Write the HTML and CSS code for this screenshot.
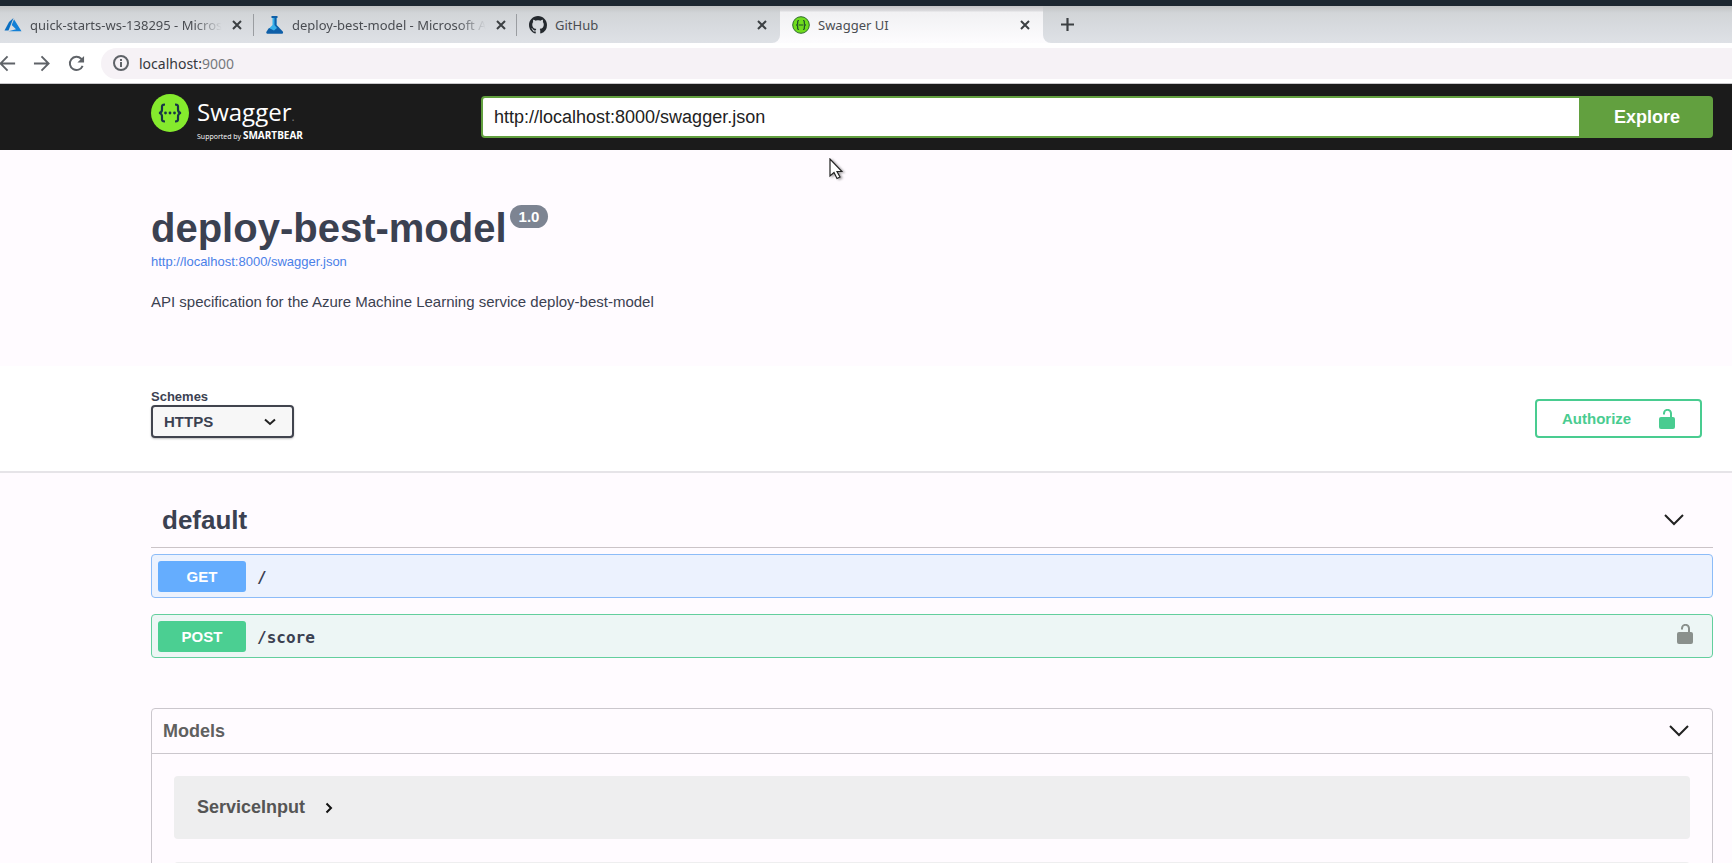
FILE: index.html
```html
<!DOCTYPE html>
<html lang="en">
<head>
<meta charset="utf-8">
<title>Swagger UI</title>
<link rel="stylesheet" href="styles.css">
</head>
<body>
<div class="screen">
  <div class="desktop-edge"></div>
  <div class="tab-strip">
    <div class="tab-group tab-group-left">
      <div class="tab tab-first">
        <svg class="tab-icon" viewBox="0 0 18 18" aria-hidden="true"><path d="M9.500 2 5 6 .500 14.500h4z" fill="#0a6fc2"/><path d="M10 3.200 7.700 9l4.300 4.200-7.500 2H17.500z" fill="#1380d6"/></svg>
        <span class="tab-title faded">quick-starts-ws-138295 - Micros</span>
        <button class="tab-close" type="button" aria-label="Close tab"><svg viewBox="0 0 10 10"><path d="M1 1l8 8M9 1L1 9"/></svg></button>
      </div>
      <div class="tab tab-second">
        <svg class="tab-icon" viewBox="0 0 18 18" aria-hidden="true"><path d="M5.500 0h6v2H5.500z" fill="#0f5fa8"/><path d="M6.500 2h4v7l3 3-5 3-7-1 5-5z" fill="#36b0ea"/><path d="M8.500 2h2v7l6.300 6.500c.7 1.200 0 2.300-1.200 2.300H2c-1.500 0-2.200-1.100-1.400-2.400L3 12l5 2.500L11 12 8.500 9z" fill="#0f5fa8"/></svg>
        <span class="tab-title faded">deploy-best-model - Microsoft A</span>
        <button class="tab-close" type="button" aria-label="Close tab"><svg viewBox="0 0 10 10"><path d="M1 1l8 8M9 1L1 9"/></svg></button>
      </div>
      <div class="tab tab-third">
        <svg class="tab-icon" viewBox="0 0 16 16" aria-hidden="true"><path fill="#24292e" d="M8 0C3.580 0 0 3.580 0 8c0 3.540 2.290 6.530 5.470 7.590.4.070.550-.170.550-.380 0-.190-.010-.820-.010-1.490-2.010.370-2.530-.490-2.690-.940-.090-.230-.480-.940-.820-1.130-.280-.150-.680-.520-.010-.530.630-.010 1.080.580 1.230.820.720 1.210 1.870.870 2.330.660.070-.520.280-.870.510-1.070-1.780-.2-3.640-.890-3.640-3.950 0-.870.310-1.590.820-2.150-.080-.2-.360-1.020.080-2.120 0 0 .670-.210 2.200.820.640-.180 1.320-.270 2-.270s1.360.090 2 .270c1.530-1.040 2.200-.820 2.200-.820.440 1.100.160 1.920.080 2.120.510.560.820 1.270.820 2.150 0 3.070-1.870 3.750-3.650 3.950.290.250.540.730.540 1.480 0 1.070-.010 1.930-.010 2.200 0 .210.150.460.550.380A8.010 8.010 0 0 0 16 8c0-4.420-3.580-8-8-8z"/></svg>
        <span class="tab-title">GitHub</span>
        <button class="tab-close" type="button" aria-label="Close tab"><svg viewBox="0 0 10 10"><path d="M1 1l8 8M9 1L1 9"/></svg></button>
      </div>
    </div>
    <div class="tab tab-active">
      <svg class="tab-icon" viewBox="0 0 18 18" aria-hidden="true"><circle cx="9" cy="9" r="8.300" fill="#6fdc1c" stroke="#2c6b2a" stroke-width="1"/><path d="M7 4.500c-1.700 0-1.300 1-1.300 2.500S5.300 8.800 4.300 9c1 .2 1.400.5 1.400 2s-.4 2.500 1.300 2.500M11 4.500c1.700 0 1.300 1 1.300 2.500s.4 1.800 1.400 2c-1 .2-1.400.5-1.400 2s.4 2.500-1.300 2.500M6.500 9h5" fill="none" stroke="#1e4b2c" stroke-width="1.200"/></svg>
      <span class="tab-title">Swagger UI</span>
      <button class="tab-close" type="button" aria-label="Close tab"><svg viewBox="0 0 10 10"><path d="M1 1l8 8M9 1L1 9"/></svg></button>
    </div>
    <div class="tab-group tab-group-right">
      <button class="new-tab" type="button" aria-label="New tab"><svg viewBox="0 0 12 12"><path d="M6 0v12M0 6h12"/></svg></button>
    </div>
  </div>

  <div class="toolbar">
    <button class="nav-button nav-back" type="button" aria-label="Back"><svg viewBox="2 0 18 18"><path d="M18 9H2M10 1.500L2.500 9l7.500 7.500"/></svg></button>
    <button class="nav-button" type="button" aria-label="Forward"><svg viewBox="0 0 18 18"><path d="M1 9h15M9 1.500L16.500 9 9 16.500"/></svg></button>
    <button class="nav-button" type="button" aria-label="Reload"><svg viewBox="0 0 18 18"><path d="M15.500 11.500A7 7 0 1 1 14 4l1.500 1.700"/><path class="solid" d="M17 1v7h-7z"/></svg></button>
    <div class="address">
      <svg class="info-icon" viewBox="0 0 16 16" aria-hidden="true"><circle cx="8" cy="8" r="7"/><path d="M8 7v5M8 4v2"/></svg>
      <span class="host">localhost:<span class="port">9000</span></span>
    </div>
  </div>

  <header class="topbar">
    <a class="brand" href="#">
      <svg class="brand-mark" viewBox="0 0 38 38" aria-hidden="true"><circle cx="19" cy="19" r="19" fill="#85ea2d"/><path d="M14 10.500c-3 0-3.200 1.200-3 4 .2 2.800-.2 4.200-3 4.500 2.800.3 3.200 1.700 3 4.500-.2 2.800 0 4 3 4M24 10.500c3 0 3.200 1.200 3 4-.2 2.800.2 4.200 3 4.500-2.800.3-3.200 1.700-3 4.500.2 2.800 0 4-3 4" fill="none" stroke="#173647" stroke-width="2.200"/><g fill="#173647"><circle cx="14.500" cy="19" r="1.400"/><circle cx="19" cy="19" r="1.400"/><circle cx="23.500" cy="19" r="1.400"/></g></svg>
      <span class="brand-text">
        <span class="brand-name">Swagger<span class="brand-dot">.</span></span>
        <span class="brand-support">Supported by <b>SMARTBEAR</b></span>
      </span>
    </a>
    <form class="spec-form">
      <input class="spec-url" type="text" aria-label="Specification URL" value="http://localhost:8000/swagger.json">
      <button class="explore" type="button">Explore</button>
    </form>
  </header>

  <main class="page">
    <section class="info">
      <h1 class="title">deploy-best-model<span class="version">1.0</span></h1>
      <a class="spec-link" href="#">http://localhost:8000/swagger.json</a>
      <p class="description">API specification for the Azure Machine Learning service deploy-best-model</p>
    </section>

    <section class="schemes">
      <div class="scheme-field">
        <label class="scheme-label" for="scheme">Schemes</label>
        <div class="select-box">
          <select class="scheme-select" id="scheme"><option>HTTPS</option></select>
          <svg class="select-arrow" viewBox="0 0 12 8" aria-hidden="true"><path d="M1 1.500l5 4.500 5-4.500"/></svg>
        </div>
      </div>
      <button class="authorize" type="button"><span>Authorize</span>
        <svg class="lock" viewBox="0 0 16 20" aria-hidden="true"><path d="M12 9V4.500a3.500 3.500 0 0 0-7-.3V5.500" class="shackle"/><rect y="8" width="16" height="12" rx="2"/></svg>
      </button>
    </section>

    <section class="operations">
      <button class="tag" type="button"><span>default</span>
        <svg class="chevron" viewBox="0 0 20 12" aria-hidden="true"><path d="M1 1l9 9 9-9"/></svg>
      </button>
      <div class="operation get">
        <button class="method" type="button">GET</button>
        <span class="path">/</span>
      </div>
      <div class="operation post">
        <button class="method" type="button">POST</button>
        <span class="path">/score</span>
        <svg class="lock" viewBox="0 0 16 20" aria-hidden="true"><path d="M12 9V4.500a3.500 3.500 0 0 0-7-.3V5.500" class="shackle"/><rect y="8" width="16" height="12" rx="2"/></svg>
      </div>
    </section>

    <section class="models">
      <button class="models-head" type="button"><span>Models</span>
        <svg class="chevron" viewBox="0 0 20 12" aria-hidden="true"><path d="M1 1l9 9 9-9"/></svg>
      </button>
      <div class="model-list">
        <button class="model" type="button"><span>ServiceInput</span>
          <svg class="model-arrow" viewBox="0 0 8 12" aria-hidden="true"><path d="M1.500 1.500L6 6l-4.500 4.500"/></svg>
        </button>
        <div class="model"></div>
      </div>
    </section>
  </main>

  <svg class="cursor" viewBox="0 0 14 22" aria-hidden="true"><path d="M1 1v17l4-3.500 3 6 3-1.500-3-5.500h5z" fill="#fff" stroke="#222" stroke-width="1.200"/></svg>
</div>
</body>
</html>
```
FILE: styles.css
```css
* {
  box-sizing: border-box;
}

body {
  margin: 0;
  font-family: "Liberation Sans", Arial, sans-serif;
  color: #3b4151;
}

button {
  margin: 0;
  padding: 0;
  border: 0;
  background: none;
  font-family: inherit;
  color: inherit;
}

svg {
  display: block;
  flex: none;
}

.screen {
  position: relative;
  height: 100vh;
  overflow: hidden;
  background: #fffbff;
}

.desktop-edge {
  height: 6px;
  background: #1c2630;
}

/* Browser tabs */

.tab-strip {
  display: flex;
  height: 37px;
  background: linear-gradient(#c4c4c6, #dcdcdf 5px, #f1f1f3 6px, #fdfcfe);
  font-family: "Noto Sans", "Open Sans", sans-serif;
  font-size: 13px;
  color: #4a4d52;
}

.tab-group {
  display: flex;
  background: linear-gradient(#c0c2c4, #d2d5d8 7px, #dee1e6);
}

.tab-group-left {
  border-bottom-right-radius: 8px;
}

.tab-group-right {
  flex: 1;
  align-items: center;
  padding-left: 18px;
  border-bottom-left-radius: 8px;
}

.tab {
  display: flex;
  flex: none;
  align-items: center;
  gap: 8px;
  width: 263px;
  padding: 0 11px 0 12px;
}

.tab-first {
  width: 254px;
  padding-left: 4px;
}

.tab-first,
.tab-second {
  background: linear-gradient(#9a9da1, #9a9da1) right center / 1px 22px no-repeat;
}

.tab-icon {
  width: 18px;
  height: 18px;
}

.tab-title {
  flex: 1;
  white-space: nowrap;
}

.faded {
  -webkit-mask-image: linear-gradient(to right, #000 85%, transparent);
  mask-image: linear-gradient(to right, #000 85%, transparent);
}

.tab-close svg {
  width: 14px;
  height: 14px;
  padding: 2px;
}

.tab-close path,
.new-tab path {
  fill: none;
  stroke: #3c4043;
  stroke-width: 2;
}

.new-tab svg {
  width: 13px;
  height: 13px;
}

/* Address bar */

.toolbar {
  display: flex;
  align-items: center;
  height: 41px;
  border-bottom: 1px solid #c9c8cb;
  background: #fff;
}

.nav-button {
  width: 35px;
}

.nav-back {
  width: 33px;
}

.nav-button svg {
  width: 17px;
  height: 17px;
}

.nav-button path {
  fill: none;
  stroke: #5f6368;
  stroke-width: 2;
}

.nav-button .solid {
  fill: #5f6368;
  stroke: none;
}

.address {
  display: flex;
  flex: 1;
  align-items: center;
  gap: 10px;
  height: 31px;
  margin-left: -2px;
  padding-left: 12px;
  border-radius: 16px 0 0 16px;
  background: #f6f2f6;
  font-family: "Noto Sans", "Open Sans", sans-serif;
  font-size: 14px;
  color: #35383c;
}

.port {
  color: #77797d;
}

.info-icon {
  width: 16px;
  height: 16px;
  fill: none;
  stroke: #5f6368;
  stroke-width: 2;
}

/* Swagger header */

.topbar {
  display: flex;
  align-items: center;
  height: 66px;
  padding: 0 19px 0 151px;
  background: #1b1b1b;
}

.brand {
  display: flex;
  flex: 0 0 330px;
  gap: 8px;
  color: #fff;
  text-decoration: none;
  font-family: "Open Sans", sans-serif;
}

.brand-mark {
  width: 38px;
  height: 38px;
}

.brand-text {
  display: flex;
  flex-direction: column;
}

.brand-name {
  font-size: 24px;
  line-height: 36px;
}

.brand-dot {
  font-size: 12px;
  line-height: 1;
  color: #777;
}

.brand-support {
  font-size: 7px;
  line-height: 8px;
}

.brand-support b {
  font-size: 10px;
  line-height: 1;
  font-weight: 700;
}

.spec-form {
  display: flex;
  flex: 1;
  height: 42px;
}

.spec-url {
  flex: 1;
  min-width: 0;
  padding: 0 11px;
  border: 2px solid #62a03f;
  border-radius: 4px 0 0 4px;
  background: #fff;
  font-family: inherit;
  font-size: 18px;
  color: #222;
}

.explore {
  width: 132px;
  border-radius: 0 4px 4px 0;
  background: #62a03f;
  font-size: 18px;
  font-weight: 700;
  color: #fff;
}

/* API info */

.info {
  display: flex;
  flex-direction: column;
  align-items: flex-start;
  height: 216px;
  padding: 55px 19px 0 151px;
}

.title {
  display: flex;
  align-items: flex-start;
  gap: 3px;
  margin: 0;
  font-size: 40px;
  line-height: 46px;
}

.version {
  padding: 0 9px;
  border-radius: 12px;
  background: #7d8492;
  font-size: 15px;
  line-height: 23px;
  color: #fff;
}

.spec-link {
  font-size: 13px;
  line-height: 22px;
  color: #4a80e8;
  text-decoration: none;
}

.description {
  margin: 18px 0 0;
  font-size: 15px;
  line-height: 22px;
}

/* Schemes */

.schemes {
  display: flex;
  align-items: flex-end;
  justify-content: space-between;
  height: 107px;
  padding: 0 30px 33px 151px;
  border-bottom: 2px solid #e6e4e8;
  background: #fff;
}

.scheme-field {
  display: flex;
  flex-direction: column;
}

.scheme-label {
  font-size: 13px;
  font-weight: 700;
  line-height: 16px;
}

.select-box {
  position: relative;
}

.scheme-select {
  display: block;
  width: 143px;
  height: 33px;
  padding: 0 11px;
  border: 2px solid #41444e;
  border-radius: 4px;
  appearance: none;
  background: #f7f7f7;
  box-shadow: 0 1px 2px rgba(0, 0, 0, 0.25);
  font-family: inherit;
  font-size: 15px;
  font-weight: 700;
  color: #3b4151;
}

.select-arrow {
  position: absolute;
  top: 13px;
  right: 18px;
  width: 12px;
  height: 8px;
  fill: none;
  stroke: #222;
  stroke-width: 2;
}

.authorize {
  display: flex;
  align-items: center;
  justify-content: space-between;
  width: 167px;
  height: 39px;
  padding: 0 25px;
  border: 2px solid #49cc90;
  border-radius: 4px;
  font-size: 15px;
  font-weight: 700;
  color: #49cc90;
}

.lock {
  width: 16px;
  height: 20px;
  fill: #49cc90;
}

.shackle {
  fill: none;
  stroke: #49cc90;
  stroke-width: 2;
}

/* Operations */

.operations {
  display: flex;
  flex-direction: column;
  padding: 20px 19px 0 151px;
}

.tag {
  display: flex;
  align-items: center;
  justify-content: space-between;
  height: 55px;
  margin-bottom: 6px;
  padding: 0 29px 0 11px;
  border-bottom: 1px solid #cbc4c8;
  font-size: 26px;
  font-weight: 700;
}

.chevron {
  width: 20px;
  height: 12px;
  fill: none;
  stroke: #222;
  stroke-width: 2;
}

.operation {
  display: flex;
  align-items: center;
  gap: 11px;
  height: 44px;
  margin-bottom: 16px;
  padding: 0 19px 0 6px;
  border: 1px solid #61affe;
  border-radius: 4px;
}

.get {
  border-color: #8cbcf8;
  background: #ecf2fe;
}

.post {
  border-color: #63cf9d;
  background: #edf6f5;
}

.method {
  width: 88px;
  height: 31px;
  border-radius: 3px;
  font-size: 15px;
  font-weight: 700;
  color: #fff;
}

.get .method {
  background: #65adfe;
}

.post .method {
  background: #4bcf92;
}

.path {
  flex: 1;
  padding-top: 2px;
  font-family: "DejaVu Sans Mono", monospace;
  font-size: 16px;
  font-weight: 700;
}

.operation .lock {
  align-self: flex-start;
  margin-top: 9px;
  fill: #8a908c;
}

.operation .shackle {
  stroke: #8a908c;
}

/* Models */

.models {
  margin: 34px 19px 0 151px;
  border: 1px solid #cbc7cd;
  border-radius: 4px;
}

.models-head {
  display: flex;
  align-items: center;
  justify-content: space-between;
  width: 100%;
  height: 45px;
  padding: 0 23px 0 11px;
  border-bottom: 1px solid #cbc7cd;
  font-size: 18px;
  font-weight: 700;
  color: #606060;
}

.model-list {
  display: flex;
  flex-direction: column;
  gap: 23px;
  padding: 22px;
}

.model {
  display: flex;
  align-items: center;
  gap: 20px;
  height: 63px;
  padding: 0 23px;
  border-radius: 4px;
  background: #eeeeef;
  font-size: 18px;
  font-weight: 700;
  color: #555;
}

.model-arrow {
  width: 8px;
  height: 12px;
  fill: none;
  stroke: #111;
  stroke-width: 2;
}

.cursor {
  position: absolute;
  top: 158px;
  left: 829px;
  width: 14px;
  height: 22px;
  filter: drop-shadow(2px 1px 1px rgba(0, 0, 0, 0.35));
}
```
